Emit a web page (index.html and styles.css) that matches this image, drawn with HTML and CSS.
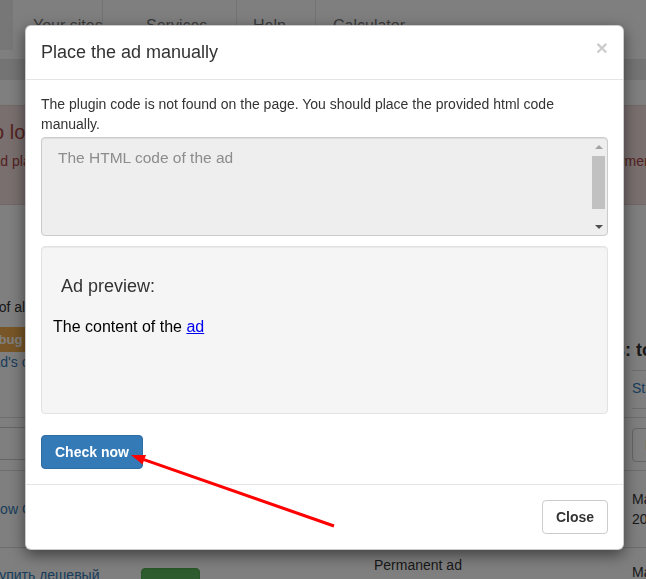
FILE: index.html
```html
<!DOCTYPE html>
<html lang="en">
<head>
  <meta charset="UTF-8">
  <meta name="viewport" content="width=device-width, initial-scale=1.0">
  <title>Place the ad manually</title>
  <link rel="stylesheet" href="styles.css">
</head>
<body>
  <!-- Page behind the modal -->
  <div class="page">
    <nav class="topnav">
      <div class="brand"></div>
      <a class="nav-link nav-sites" href="#">Your sites</a>
      <a class="nav-link nav-services" href="#">Services</a>
      <a class="nav-link nav-help" href="#">Help</a>
      <a class="nav-link nav-calc" href="#">Calculator</a>
    </nav>
    <div class="subbar"></div>

    <div class="alert">
      <h4 class="alert-title">Too low balance</h4>
      <div class="alert-line">
        <span class="alert-left">Ad placement is not confirmed</span>
        <span class="alert-right">payment</span>
      </div>
    </div>

    <div class="intro">
      <div class="intro-left">
        <p class="list-title">List of all ads</p>
        <span class="label-debug">Debug</span>
        <a class="code-link" href="#">Ad's code</a>
      </div>
      <div class="intro-right">
        <h3 class="side-title">Stats: top ads</h3>
        <a class="side-link" href="#">Statistics</a>
      </div>
    </div>

    <div class="ads-table">
      <div class="filter-row">
        <div><span class="filter-input"></span></div>
        <div><button class="filter-btn">Filter</button></div>
      </div>
      <div class="ad-row ad-row-first">
        <a class="show-link" href="#">Show Code</a>
        <span></span>
        <span></span>
        <span class="ad-date">May 14,<br>2019</span>
      </div>
      <div class="ad-row ad-row-second">
        <a class="buy-link" href="#">Купить дешевый</a>
        <span><span class="btn-success"></span></span>
        <span class="ad-type">Permanent ad</span>
        <span class="ad-date-late">May 20,<br>2019</span>
      </div>
    </div>
  </div>

  <div class="backdrop"></div>

  <!-- Modal -->
  <div class="modal">
    <div class="modal-dialog">
      <div class="modal-content">
        <div class="modal-header">
          <button class="close">&times;</button>
          <h4 class="modal-title">Place the ad manually</h4>
        </div>
        <div class="modal-body">
          <p class="notice">The plugin code is not found on the page. You should place the provided html code manually.</p>
          <div class="code-box">
            <div class="code-text">The HTML code of the ad</div>
            <div class="scrollbar">
              <span class="arrow-up"></span>
              <span class="thumb"></span>
              <span class="arrow-down"></span>
            </div>
          </div>
          <div class="preview">
            <h4 class="preview-title">Ad preview:</h4>
            <div class="preview-ad">The content of the <a href="#">ad</a></div>
          </div>
          <button class="btn btn-primary check-btn">Check now</button>
        </div>
        <div class="modal-footer">
          <button class="btn btn-default">Close</button>
        </div>
      </div>
    </div>
  </div>

  <!-- Red pointer drawn over the screenshot -->
  <svg class="pointer" width="646" height="579" viewBox="0 0 646 579">
    <line x1="334" y1="526" x2="144" y2="459.6" stroke="#ff0000" stroke-width="3"/>
    <polygon points="131,455 146,455 142.5,464.5" fill="#ff0000"/>
  </svg>
</body>
</html>
```

FILE: styles.css
```css
* {
  box-sizing: border-box;
}
body {
  margin: 0;
  font-family: "Liberation Sans", Arial, sans-serif;
  font-size: 14px;
  line-height: 1.42857;
  color: #333;
  background-color: #fff;
  overflow: hidden;
}
a {
  color: #337ab7;
  text-decoration: none;
}

/* Page behind */
.page {
  white-space: nowrap;
}
.topnav {
  display: flex;
  height: 60px;
  border-bottom: 1px solid #e7e7e7;
}
.brand {
  width: 13px;
  height: 50px;
  background-color: #eee;
}
.nav-link {
  color: #777;
  font-size: 16px;
  line-height: 20px;
  padding-top: 16px;
  border-right: 1px solid #e7e7e7;
}
.nav-sites {
  width: 90px;
  padding-left: 20px;
}
.nav-services {
  width: 134px;
  padding-left: 43px;
}
.nav-help {
  width: 79px;
  padding-left: 16px;
}
.nav-calc {
  padding-left: 17px;
  border-right: 0;
}
.subbar {
  height: 20px;
  background-color: #e8e8e8;
}
.alert {
  height: 100px;
  margin-top: 25px;
  padding-top: 15px;
  background-color: #f2dede;
  color: #a94442;
  border-top: 1px solid #ebccd1;
  border-bottom: 1px solid #ebccd1;
}
.alert-title {
  margin: 0;
  font-size: 20px;
  line-height: 22px;
  font-weight: normal;
  text-indent: -28px;
}
.alert-line {
  display: grid;
  grid-template-columns: 1fr 44px;
  margin-top: 8px;
  line-height: 20px;
}
.alert-left {
  text-indent: -9px;
  overflow: hidden;
}
.intro {
  display: grid;
  grid-template-columns: 1fr 14px;
  height: 212px;
}
.intro-left {
  padding-top: 92px;
}
.list-title {
  margin: 0;
  line-height: 20px;
  text-indent: -27px;
}
.label-debug {
  display: inline-block;
  margin: 10px 0 0 -26px;
  padding: 0 8px;
  height: 25px;
  line-height: 25px;
  background-color: #f0ad4e;
  color: #fff;
  font-size: 13px;
  font-weight: bold;
  border-radius: 3px;
}
.code-link {
  display: block;
  line-height: 20px;
  text-indent: -9px;
}
.intro-right {
  padding-top: 132px;
}
.side-title {
  margin: 0;
  padding-bottom: 7px;
  font-size: 18px;
  line-height: 26px;
  text-indent: -51px;
  border-bottom: 1px solid #ddd;
}
.side-link {
  display: block;
  margin-top: 7px;
  padding-bottom: 10px;
  line-height: 20px;
  border-bottom: 1px solid #ddd;
}
.filter-row {
  display: grid;
  grid-template-columns: 632px 1fr;
  height: 54px;
  padding-top: 9px;
  border-top: 1px solid #ddd;
  border-bottom: 1px solid #ddd;
}
.filter-input {
  display: block;
  width: 140px;
  height: 33px;
  margin-left: -20px;
  border: 1px solid #ccc;
  border-radius: 4px;
}
.filter-btn {
  height: 34px;
  margin-top: 1px;
  padding: 6px 12px;
  font-family: inherit;
  font-size: 14px;
  color: #333;
  background-color: #fff;
  border: 1px solid #ccc;
  border-radius: 4px;
}
.ad-row {
  display: grid;
  grid-template-columns: 141px 233px 258px 1fr;
  border-bottom: 1px solid #ddd;
  line-height: 20px;
}
.ad-row-first {
  height: 77px;
  align-items: center;
}
.show-link {
  text-indent: -17px;
}
.ad-row-second {
  height: 80px;
  align-items: start;
}
.buy-link {
  padding-top: 17px;
  text-indent: -9px;
}
.btn-success {
  display: block;
  width: 59px;
  height: 34px;
  margin-top: 20px;
  background-color: #5cb85c;
  border: 1px solid #4cae4c;
  border-radius: 4px;
}
.ad-type {
  padding-top: 7px;
}
.ad-date-late {
  padding-top: 14px;
}

/* Modal */
.backdrop {
  position: fixed;
  top: 0;
  left: 0;
  right: 0;
  bottom: 0;
  background-color: rgba(0, 0, 0, 0.5);
}
.modal {
  position: fixed;
  top: 0;
  left: 0;
  right: 0;
  bottom: 0;
}
.modal-dialog {
  width: 599px;
  margin: 25px 0 0 25px;
}
.modal-content {
  background-color: #fff;
  border: 1px solid rgba(0, 0, 0, 0.2);
  border-radius: 6px;
  box-shadow: 0 5px 15px rgba(0, 0, 0, 0.5);
}
.modal-header {
  padding: 13px 15px 14px;
  border-bottom: 1px solid #e5e5e5;
}
.close {
  float: right;
  margin-top: -2px;
  padding: 0;
  font-family: inherit;
  font-size: 21px;
  font-weight: bold;
  line-height: 1;
  color: #000;
  opacity: 0.2;
  background: none;
  border: 0;
}
.modal-title {
  margin: 0;
  font-size: 18px;
  line-height: 26px;
  font-weight: normal;
}
.modal-body {
  padding: 15px;
}
.notice {
  margin: 0 0 2px;
}
.code-box {
  display: flex;
  height: 99px;
  background-color: #eee;
  border: 1px solid #ccc;
  border-radius: 4px;
  box-shadow: inset 0 1px 1px rgba(0, 0, 0, 0.075);
}
.code-text {
  flex: 1;
  padding: 10px 16px;
  font-size: 15.5px;
  line-height: 20px;
  color: #8c8c8c;
}
.scrollbar {
  display: flex;
  flex-direction: column;
  align-items: center;
  width: 17px;
  padding: 7px 0 6px;
}
.arrow-up {
  border-left: 4px solid transparent;
  border-right: 4px solid transparent;
  border-bottom: 4px solid #a3a3a3;
}
.thumb {
  width: 13px;
  height: 53px;
  margin-top: 7px;
  background-color: #c1c1c1;
}
.arrow-down {
  margin-top: auto;
  border-left: 4px solid transparent;
  border-right: 4px solid transparent;
  border-top: 4px solid #505050;
}
.preview {
  height: 168px;
  margin-top: 10px;
  padding: 26px 11px;
  background-color: #f5f5f5;
  border: 1px solid #e3e3e3;
  border-radius: 4px;
  box-shadow: inset 0 1px 1px rgba(0, 0, 0, 0.05);
}
.preview-title {
  margin: 0 0 19px;
  padding: 0 8px;
  font-size: 18px;
  line-height: 26px;
  font-weight: normal;
}
.preview-ad {
  font-size: 16px;
  line-height: 18px;
  color: #000;
}
.preview-ad a {
  color: #0000ee;
  text-decoration: underline;
}
.btn {
  padding: 6px 13px;
  font-family: inherit;
  font-size: 14px;
  font-weight: bold;
  line-height: 20px;
  border: 1px solid transparent;
  border-radius: 4px;
}
.btn-primary {
  color: #fff;
  background-color: #337ab7;
  border-color: #2e6da4;
}
.check-btn {
  display: block;
  margin-top: 21px;
}
.modal-footer {
  display: flex;
  justify-content: flex-end;
  padding: 15px;
  border-top: 1px solid #e5e5e5;
}
.btn-default {
  color: #333;
  background-color: #fff;
  border-color: #ccc;
}
.pointer {
  position: fixed;
  top: 0;
  left: 0;
  pointer-events: none;
}
```
